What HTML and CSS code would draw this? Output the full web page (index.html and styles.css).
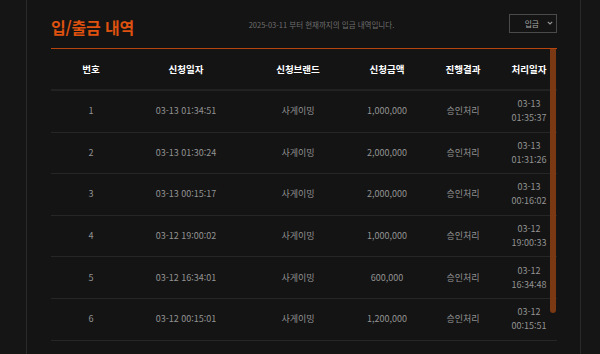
FILE: index.html
```html
<!DOCTYPE html>
<html lang="ko">
<head>
<meta charset="utf-8">
<title>입/출금 내역</title>
<link rel="stylesheet" href="styles.css">
</head>
<body>
<div class="page">
  <main class="main">
    <header class="head">
      <h1 class="title">입/출금 내역</h1>
      <p class="sub">2025-03-11 부터 현재까지의 입금 내역입니다.</p>
      <div class="select"><span>입금</span><svg class="chev" width="6" height="4" viewBox="0 0 6 4"><path d="M0.8 0.8 L3 3 L5.2 0.8" fill="none" stroke="#9a9a9a" stroke-width="1.1"/></svg></div>
    </header>
    <section class="box">
      <div class="table">
        <div class="row hrow">
          <div class="c">번호</div><div class="c">신청일자</div><div class="c">신청브랜드</div><div class="c">신청금액</div><div class="c">진행결과</div><div class="c">처리일자</div>
        </div>
        <div class="row">
          <div class="c">1</div><div class="c">03-13 01:34:51</div><div class="c">사게이밍</div><div class="c">1,000,000</div><div class="c">승인처리</div><div class="c">03-13<br>01:35:37</div>
        </div>
        <div class="row">
          <div class="c">2</div><div class="c">03-13 01:30:24</div><div class="c">사게이밍</div><div class="c">2,000,000</div><div class="c">승인처리</div><div class="c">03-13<br>01:31:26</div>
        </div>
        <div class="row">
          <div class="c">3</div><div class="c">03-13 00:15:17</div><div class="c">사게이밍</div><div class="c">2,000,000</div><div class="c">승인처리</div><div class="c">03-13<br>00:16:02</div>
        </div>
        <div class="row">
          <div class="c">4</div><div class="c">03-12 19:00:02</div><div class="c">사게이밍</div><div class="c">1,000,000</div><div class="c">승인처리</div><div class="c">03-12<br>19:00:33</div>
        </div>
        <div class="row">
          <div class="c">5</div><div class="c">03-12 16:34:01</div><div class="c">사게이밍</div><div class="c">600,000</div><div class="c">승인처리</div><div class="c">03-12<br>16:34:48</div>
        </div>
        <div class="row">
          <div class="c">6</div><div class="c">03-12 00:15:01</div><div class="c">사게이밍</div><div class="c">1,200,000</div><div class="c">승인처리</div><div class="c">03-12<br>00:15:51</div>
        </div>
      </div>
      <div class="thumb"></div>
    </section>
  </main>
</div>
</body>
</html>
```

FILE: styles.css
```css
* { box-sizing: border-box; margin: 0; padding: 0; }
html, body { height: 100%; }
body {
  background: #151515;
  font-family: "Noto Sans CJK KR", "Noto Sans", sans-serif;
  overflow: hidden;
}
.page {
  height: 354px;
  padding-left: 26px;
  padding-right: 19px;
}
.main {
  height: 100%;
  background: #141414;
  border-left: 1px solid #2a2a2a;
  border-right: 1px solid #2a2a2a;
  padding: 0 23px 0 24px;
}
.head {
  height: 48px;
  display: flex;
  align-items: center;
  justify-content: space-between;
  padding-top: 1px;
}
.title {
  font-size: 16px;
  font-weight: 700;
  color: #df510f;
  letter-spacing: -0.2px;
  line-height: 1;
  padding-top: 4px;
}
.sub {
  font-size: 7.5px;
  color: #6e6e6e;
  line-height: 1;
  padding-top: 1px;
}
.select {
  width: 48px;
  height: 19px;
  border: 1px solid #4a4a4a;
  display: flex;
  align-items: center;
  justify-content: flex-end;
  gap: 8px;
  padding-right: 3px;
  font-size: 7.8px;
  color: #a6a6a6;
  margin-top: -3px;
}
.box {
  position: relative;
  border-top: 1px solid #b9450e;
}
.table {
  width: 100%;
}
.row {
  display: grid;
  grid-template-columns: 80px 110px 114px 64px 88px 44px 6px;
  height: 41.6px;
  border-bottom: 1px solid #262626;
  align-items: center;
  font-size: 9px;
  color: #929292;
  text-align: center;
  line-height: 14px;
}
.hrow {
  height: 42px;
  border-bottom: 2px solid #222;
  color: #fff;
  font-weight: 700;
  font-size: 9.5px;
}
.thumb {
  position: absolute;
  top: 0;
  right: 1px;
  width: 6px;
  height: 264px;
  background: #7a3912;
  border-radius: 0 0 3px 3px;
}
```
